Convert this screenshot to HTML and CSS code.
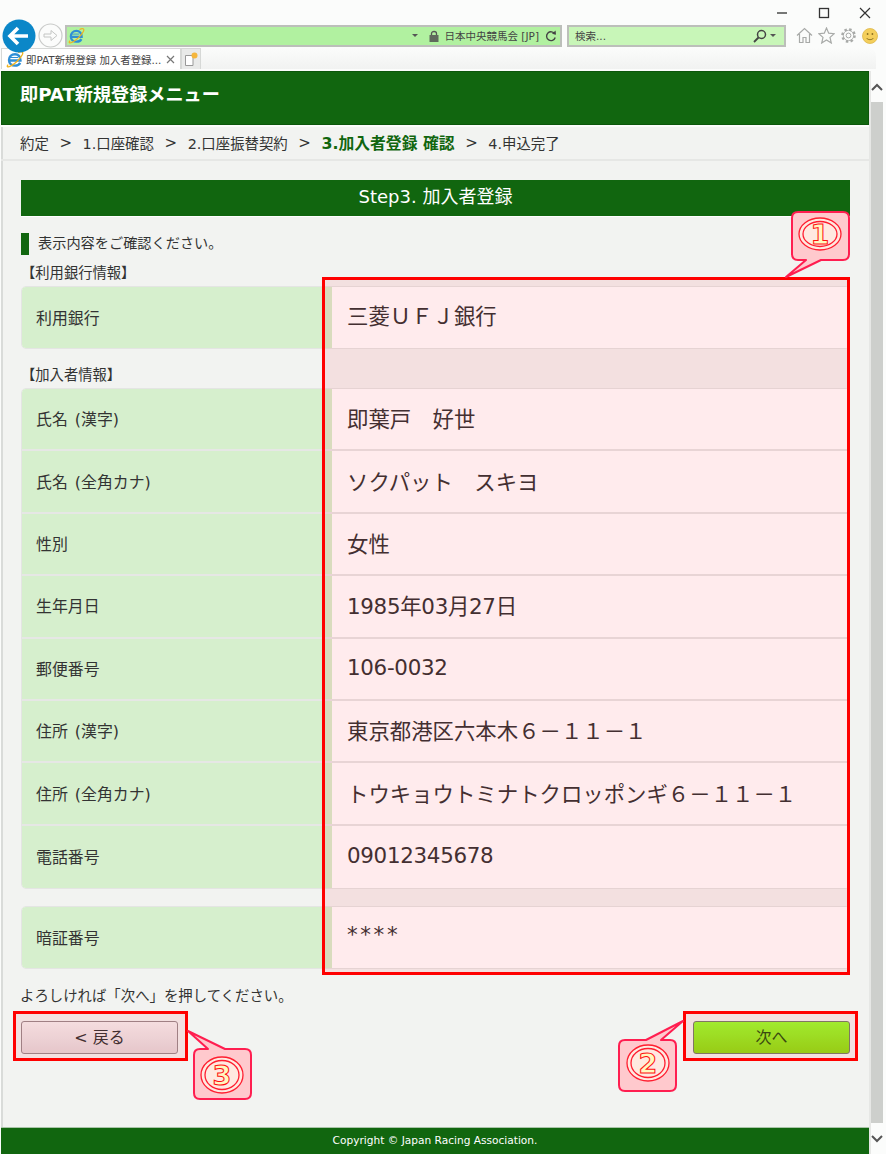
FILE: index.html
```html
<!DOCTYPE html>
<html lang="ja">
<head>
<meta charset="utf-8">
<title>即PAT新規登録</title>
<link rel="stylesheet" href="styles.css">
</head>
<body>
<svg class="defs" width="0" height="0" aria-hidden="true">
  <symbol id="ie" viewBox="0 0 18 18">
    <path d="M3 10.5 H14.5 C14.8 6.5 12 4.2 9 4.2 C5.5 4.2 3 6.8 3 10 C3 13.4 5.6 15.6 9 15.6 C11.4 15.6 13.2 14.6 14.2 12.8" fill="none" stroke="#2f8fd6" stroke-width="2.4"/>
    <path d="M4 7.5 H12" stroke="#2f8fd6" stroke-width="1"/>
    <path d="M2.2 14.6 C0.2 16.5 1.6 17.6 4.5 16.2 C9 14 14.5 8.5 16.4 4.5 C17.6 1.8 15.8 0.8 12.2 2.6" fill="none" stroke="#f0b31e" stroke-width="1.3"/>
  </symbol>
</svg>

<header class="chrome">
  <div class="win-controls">
    <svg class="win-icon" width="14" height="14" viewBox="0 0 14 14"><path d="M2 7 H12" stroke="#555" stroke-width="1.6"/></svg>
    <svg class="win-icon" width="14" height="14" viewBox="0 0 14 14"><rect x="2.5" y="2.5" width="9" height="9" fill="none" stroke="#333" stroke-width="1.3"/></svg>
    <svg class="win-icon" width="14" height="14" viewBox="0 0 14 14"><path d="M2 2 L12 12 M12 2 L2 12" stroke="#333" stroke-width="1.2"/></svg>
  </div>
  <div class="nav-row">
    <svg class="back-btn" width="34" height="34" viewBox="0 0 34 34"><circle cx="17" cy="17" r="16.5" fill="#0b87c8"/><path d="M8 17 H26 M16 9 L8 17 L16 25" fill="none" stroke="#fff" stroke-width="3.6"/></svg>
    <svg class="fwd-btn" width="25" height="25" viewBox="0 0 25 25"><circle cx="12.5" cy="12.5" r="11.5" fill="#fbfcfb" stroke="#c9cbc9" stroke-width="1.2"/><path d="M6 11 H13 V7.5 L19 12.5 L13 17.5 V14 H6 Z" fill="none" stroke="#c4c6c4" stroke-width="1"/></svg>
    <div class="addr">
      <svg class="ie-icon" width="17" height="17"><use href="#ie"/></svg>
      <span class="addr-fill"></span>
      <span class="caret"></span>
      <svg class="lock" width="10" height="12" viewBox="0 0 10 12"><path d="M2.5 5.5 V3.5 C2.5 0.8 7.5 0.8 7.5 3.5 V5.5" fill="none" stroke="#555" stroke-width="1.3"/><rect x="0.5" y="5" width="9" height="7" fill="#5f6a5c"/></svg>
      <span class="addr-text">日本中央競馬会 [JP]</span>
      <svg class="refresh" width="12" height="12" viewBox="0 0 12 12"><path d="M9.8 4 A4.4 4.4 0 1 0 10.2 7.5" fill="none" stroke="#444" stroke-width="1.4"/><path d="M7 3.8 L11 4.8 L10.6 0.6 Z" fill="#444"/></svg>
    </div>
    <div class="search">
      <span class="search-text">検索...</span>
      <svg class="magnifier" width="14" height="14" viewBox="0 0 14 14"><circle cx="8.5" cy="5.5" r="4" fill="none" stroke="#444" stroke-width="1.5"/><path d="M5.5 8.5 L1 13" stroke="#444" stroke-width="1.8"/></svg>
      <span class="caret"></span>
    </div>
    <div class="tools">
      <svg width="17" height="17" viewBox="0 0 17 17"><path d="M1 8.5 L8.5 1.5 L16 8.5 M3.5 7 V15.5 H7 V10.5 H10 V15.5 H13.5 V7" fill="none" stroke="#a8aaa8" stroke-width="1.2"/></svg>
      <svg width="17" height="17" viewBox="0 0 17 17"><path d="M8.5 1 L10.7 6.2 L16.2 6.7 L12 10.4 L13.3 16 L8.5 13 L3.7 16 L5 10.4 L0.8 6.7 L6.3 6.2 Z" fill="none" stroke="#a8aaa8" stroke-width="1.2"/></svg>
      <svg width="17" height="17" viewBox="0 0 17 17"><circle cx="8.5" cy="8.5" r="6" fill="none" stroke="#a8aaa8" stroke-width="2.6" stroke-dasharray="2.4 2.3"/><circle cx="8.5" cy="8.5" r="5.2" fill="none" stroke="#a8aaa8" stroke-width="0.8"/><circle cx="8.5" cy="8.5" r="2.4" fill="none" stroke="#a8aaa8" stroke-width="1"/></svg>
      <svg width="16" height="16" viewBox="0 0 16 16"><circle cx="8" cy="8" r="7.5" fill="#f4cf5c" stroke="#ddb84a" stroke-width="0.8"/><circle cx="5.6" cy="6" r="0.9" fill="#8a6f20"/><circle cx="10.4" cy="6" r="0.9" fill="#8a6f20"/><path d="M4.5 10 C6 12.2 10 12.2 11.5 10" fill="none" stroke="#8a6f20" stroke-width="0.9"/></svg>
    </div>
  </div>
  <div class="tab-row">
    <div class="tab">
      <svg class="ie-icon" width="18" height="18"><use href="#ie"/></svg>
      <span class="tab-title">即PAT新規登録 加入者登録...</span>
      <svg class="tab-close" width="9" height="9" viewBox="0 0 9 9"><path d="M1 1 L8 8 M8 1 L1 8" stroke="#777" stroke-width="1.2"/></svg>
    </div>
    <div class="new-tab">
      <svg width="14" height="15" viewBox="0 0 14 15"><path d="M1.5 3.5 H9 V13.5 H1.5 Z" fill="#fff" stroke="#999" stroke-width="1"/><circle cx="10.5" cy="3.5" r="3" fill="#f5b63c"/></svg>
    </div>
    <div class="tab-fill"></div>
  </div>
</header>

<div class="viewport">
  <div class="page">
    <div class="site-head">即PAT新規登録メニュー</div>
    <nav class="crumbs">
      <span>約定</span><span class="sep">&gt;</span>
      <span>1.口座確認</span><span class="sep">&gt;</span>
      <span>2.口座振替契約</span><span class="sep">&gt;</span>
      <span class="current">3.加入者登録 確認</span><span class="sep">&gt;</span>
      <span>4.申込完了</span>
    </nav>
    <main class="content">
      <h1 class="step">Step3. 加入者登録</h1>
      <p class="notice">表示内容をご確認ください。</p>

      <div class="sec-label sec-first">【利用銀行情報】</div>
      <div class="table table-single">
        <div class="row"><div class="key">利用銀行</div><div class="val">三菱ＵＦＪ銀行</div></div>
      </div>

      <div class="sec-label">【加入者情報】</div>
      <div class="table">
        <div class="row"><div class="key">氏名 (漢字)</div><div class="val">即葉戸　好世</div></div>
        <div class="row"><div class="key">氏名 (全角カナ)</div><div class="val">ソクパット　スキヨ</div></div>
        <div class="row"><div class="key">性別</div><div class="val">女性</div></div>
        <div class="row"><div class="key">生年月日</div><div class="val val-num">1985年03月27日</div></div>
        <div class="row"><div class="key">郵便番号</div><div class="val val-num">106-0032</div></div>
        <div class="row"><div class="key">住所 (漢字)</div><div class="val">東京都港区六本木６－１１－１</div></div>
        <div class="row"><div class="key">住所 (全角カナ)</div><div class="val">トウキョウトミナトクロッポンギ６－１１－１</div></div>
        <div class="row"><div class="key">電話番号</div><div class="val val-num">09012345678</div></div>
      </div>

      <div class="table table-single table-pin">
        <div class="row"><div class="key">暗証番号</div><div class="val val-pin">****</div></div>
      </div>

      <p class="confirm">よろしければ「次へ」を押してください。</p>
      <div class="actions">
        <button class="btn btn-back" type="button">&lt; 戻る</button>
        <button class="btn btn-next" type="button">次へ</button>
      </div>
    </main>
    <footer class="site-foot">Copyright © Japan Racing Association.</footer>
  </div>
  <div class="scrollbar">
    <svg class="chev" width="12" height="8" viewBox="0 0 12 8"><path d="M1 7 L6 2 L11 7" fill="none" stroke="#555" stroke-width="2"/></svg>
    <div class="thumb"></div>
    <svg class="chev" width="12" height="8" viewBox="0 0 12 8"><path d="M1 1 L6 6 L11 1" fill="none" stroke="#555" stroke-width="2"/></svg>
  </div>
</div>

<div class="mark mark-1"></div>
<div class="mark mark-2"></div>
<div class="mark mark-3"></div>

<svg class="callout callout-1" width="68" height="70" viewBox="0 0 68 70">
  <path class="bubble" d="M14 2 H59 Q65 2 65 8 V44 Q65 50 59 50 H37 L2 67 L22 50 H14 Q8 50 8 44 V8 Q8 2 14 2 Z"/>
  <ellipse class="ring" cx="36" cy="24" rx="21" ry="16"/><ellipse class="ring" cx="36" cy="24" rx="17" ry="12.5"/>
  <text class="num" x="36" y="34" text-anchor="middle">1</text>
</svg>
<svg class="callout callout-2" width="72" height="76" viewBox="0 0 72 76">
  <path class="bubble" d="M10 22 H31 L68 3 L46 22 H55 Q61 22 61 28 V67 Q61 73 55 73 H10 Q4 73 4 67 V28 Q4 22 10 22 Z"/>
  <ellipse class="ring" cx="33" cy="45" rx="21" ry="18"/><ellipse class="ring" cx="33" cy="45" rx="17" ry="14.5"/>
  <text class="num" x="33" y="55" text-anchor="middle">2</text>
</svg>
<svg class="callout callout-3" width="72" height="74" viewBox="0 0 72 74">
  <path class="bubble" d="M3 3 L40 21 H60 Q66 21 66 27 V65 Q66 71 60 71 H15 Q9 71 9 65 V27 Q9 21 15 21 H23 Z"/>
  <ellipse class="ring" cx="37" cy="47" rx="21" ry="18"/><ellipse class="ring" cx="37" cy="47" rx="17" ry="14.5"/>
  <text class="num" x="37" y="57" text-anchor="middle">3</text>
</svg>
</body>
</html>
```
FILE: styles.css
```css
* { box-sizing: border-box; }
html, body { margin: 0; padding: 0; }
body {
  width: 886px;
  height: 1154px;
  overflow: hidden;
  position: relative;
  background: #fbfcfb;
  color: #333;
  font-family: "DejaVu Sans", "Noto Sans CJK JP", sans-serif;
}
.defs { position: absolute; }

/* browser chrome */
.chrome { height: 71px; display: flex; flex-direction: column; }
.win-controls { height: 24px; display: flex; justify-content: flex-end; align-items: center; gap: 27.5px; padding: 2px 14px 0 0; }
.nav-row { height: 23px; display: flex; align-items: center; padding-left: 2px; position: relative; }
.back-btn { flex: none; }
.fwd-btn { flex: none; margin-left: 2px; margin-right: 2px; }
.addr, .search { height: 22px; display: flex; align-items: center; border: 2px solid #bcbfba; font-size: 10.5px; color: #444; }
.addr { width: 497px; background: #b1f1a0; padding: 0 2px 0 1px; }
.addr-fill { flex: 1; }
.caret { width: 0; height: 0; border: 3px solid transparent; border-top: 3px solid #555; border-bottom: 0; flex: none; }
.lock { margin: 0 6px 0 11px; flex: none; }
.addr-text { white-space: nowrap; }
.refresh { margin-left: 6px; margin-right: 1px; flex: none; }
.search { width: 219px; margin-left: 5px; background: #c8f6b8; padding: 0 8px 0 6px; }
.search-text { flex: 1; }
.magnifier { margin-right: 3px; }
.tools { display: flex; align-items: center; gap: 5px; margin-left: 10px; }
.tab-row { height: 24px; display: flex; align-items: flex-end; padding: 0 0 2px 1px; }
.tab { width: 180px; height: 21px; background: #fff; border: 1px solid #d6d8d6; border-bottom: 0; display: flex; align-items: center; padding-left: 4px; font-size: 10.4px; color: #444; white-space: nowrap; }
.tab-title { margin-left: 2px; flex: 1; }
.tab-close { margin-right: 5px; flex: none; }
.new-tab { width: 20px; height: 21px; background: #e9eae9; border: 1px solid #d6d8d6; border-bottom: 0; display: flex; align-items: center; justify-content: center; }
.tab-fill { width: 675px; height: 21px; background: linear-gradient(#fbfcfb, #f1f2f1); border-radius: 0 8px 0 0; }

/* page */
.viewport { display: flex; height: 1083px; padding-left: 1px; }
.page { width: 868px; display: flex; flex-direction: column; background: #f2f3f1; }
.site-head { height: 54px; background: #11660f; border: 1px solid #0c560b; color: #fff; font-weight: bold; font-size: 18.15px; line-height: 46px; padding-left: 18px; }
.crumbs { height: 36px; border-top: 2px solid #fbfcfb; border-bottom: 2px solid #e6e7e5; display: flex; align-items: center; gap: 10.6px; padding: 0 0 2px 19px; font-size: 14.4px; box-shadow: inset 2px 0 #d9dbd9; }
.sep { font-size: 15px; line-height: 18px; padding-top: 2px; }
.current { color: #11660f; font-weight: bold; font-size: 15.8px; }
.content { flex: 1; padding: 19px 19px 0 20px; box-shadow: inset 2px 0 #d9dbd9; }
.step { height: 36px; margin: 0; background: #11660f; color: #fff; font-size: 18px; font-weight: normal; line-height: 34px; text-align: center; box-shadow: 0 1px #fff; }
.notice { height: 22px; margin: 17px 0 0; border-left: 8px solid #11660f; padding-left: 9px; font-size: 14.2px; line-height: 21px; }
.sec-label { margin-top: 16px; height: 23px; font-size: 14.3px; line-height: 20px; }
.sec-first { margin-top: 8px; }
.table { border: 1px solid #e4e5e3; border-radius: 5px; overflow: hidden; background: #fff; }
.table-pin { margin-top: 17px; }
.row { height: 62.4px; display: flex; border-bottom: 2px solid #e6e7e5; }
.table-single .row { height: 61px; }
.table .row:last-child { border-bottom: 0; }
.key { width: 310px; flex: none; background: #d6efcd; font-size: 15.9px; word-spacing: 2px; padding: 0 0 1px 14px; display: flex; align-items: center; }
.val { flex: 1; background: #fff; font-size: 21.4px; padding-left: 15px; display: flex; align-items: center; padding-bottom: 3px; }
.table-single .val { padding-bottom: 6px; }
.val-num { letter-spacing: -0.3px; }
.table-single .val-pin { padding-bottom: 7px; letter-spacing: 2.6px; }
.confirm { margin: 17px 0 0 -1px; font-size: 14.4px; line-height: 20px; }
.actions { margin-top: 15px; display: flex; justify-content: space-between; }
.btn { width: 157px; height: 33px; padding: 0 0 3px; border-radius: 3px; font-family: inherit; font-size: 16px; color: #333; }
.btn-back { background: linear-gradient(#f4f0f0, #e4d8da); border: 1px solid #988b8e; }
.btn-next { background: linear-gradient(#99ff30, #90dd16); border: 1px solid #77806a; color: #2a4f10; }
.site-foot { height: 27px; background: #11660f; border-top: 1px solid #a9c4a8; color: #fff; font-size: 10.6px; line-height: 25px; text-align: center; }

/* scrollbar */
.scrollbar { width: 17px; display: flex; flex-direction: column; align-items: center; border-left: 2px solid #e6e7e5; padding-right: 3px; background: #fbfcfb; }
.chev { flex: none; margin: 12px 0 11px; }
.thumb { flex: 1; width: 12px; background: #cdcfcc; }

/* annotations laid over the screenshot */
.mark { position: absolute; border: 3px solid #ff0000; background: rgba(255, 0, 20, 0.08); }
.mark-1 { left: 322px; top: 277px; width: 528px; height: 698px; }
.mark-2 { left: 683px; top: 1011px; width: 175px; height: 50px; }
.mark-3 { left: 13px; top: 1011px; width: 175px; height: 50px; }
.callout { position: absolute; overflow: visible; }
.callout-1 { left: 784px; top: 210px; }
.callout-2 { left: 615px; top: 1018px; }
.callout-3 { left: 185px; top: 1028px; }
.bubble { fill: #ffc9cd; stroke: #ff1e50; stroke-width: 2; stroke-linejoin: round; }
.ring { fill: #ffe9e0; stroke: #ff1e30; stroke-width: 1.3; }
.num { font-family: "DejaVu Sans", sans-serif; font-weight: bold; font-size: 27px; fill: #fff8c0; stroke: #ff1010; stroke-width: 1; }
```
